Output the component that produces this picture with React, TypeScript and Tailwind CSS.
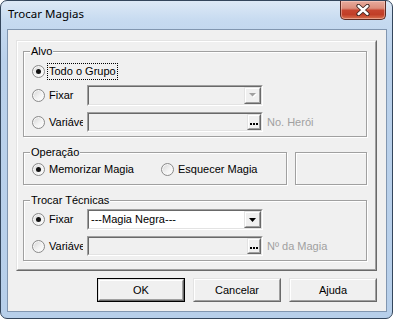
import React from "react";

const TXT = "font-['Liberation_Sans',Arial,sans-serif] text-[11px] leading-[13px] text-black";

function Radio({ checked }: { checked?: boolean }) {
  return (
    <span className="w-[13px] h-[13px] shrink-0 rounded-full border border-[#8a8a8a] bg-[linear-gradient(135deg,#d4d4d4_0%,#f2f2f2_55%,#ffffff_100%)] flex items-center justify-center shadow-[inset_0_0_0_1px_#f7f7f7]">
      {checked && <span className="w-[5px] h-[5px] rounded-full bg-[#121212]" />}
    </span>
  );
}

function Sunken({ className, inner, children }: { className: string; inner: string; children?: React.ReactNode }) {
  return (
    <div className={"border border-t-[#a0a0a0] border-l-[#a0a0a0] border-b-white border-r-white " + className}>
      <div className={"h-full flex items-center border border-t-[#696969] border-l-[#696969] border-b-[#e3e3e3] border-r-[#e3e3e3] " + inner}>
        {children}
      </div>
    </div>
  );
}

function Raised({ className, children }: { className: string; children?: React.ReactNode }) {
  return (
    <div className={"border border-t-[#e3e3e3] border-l-[#e3e3e3] border-b-[#696969] border-r-[#696969] bg-[#f0f0f0] " + className}>
      <div className="w-full h-full border border-t-white border-l-white border-b-[#a0a0a0] border-r-[#a0a0a0] flex items-center justify-center">
        {children}
      </div>
    </div>
  );
}

function Arrow({ disabled }: { disabled?: boolean }) {
  return disabled ? (
    <svg width="8" height="5" viewBox="0 0 8 5">
      <path d="M1 1h7L4.5 4.5z" fill="#ffffff" />
      <path d="M0 0h7L3.5 3.5z" fill="#a0a0a0" />
    </svg>
  ) : (
    <svg width="7" height="4" viewBox="0 0 7 4">
      <path d="M0 0h7L3.5 4z" fill="#000" />
    </svg>
  );
}

function Dots() {
  return (
    <svg width="8" height="2" viewBox="0 0 8 2" className="mt-[3px]">
      <rect x="0" y="0" width="2" height="2" fill="#000" />
      <rect x="3" y="0" width="2" height="2" fill="#000" />
      <rect x="6" y="0" width="2" height="2" fill="#000" />
    </svg>
  );
}

function Group({ label, className, children }: { label?: string; className: string; children?: React.ReactNode }) {
  return (
    <div className={"relative border border-[#a0a0a0] shadow-[inset_1px_1px_0_#ffffff,1px_1px_0_#ffffff] " + className}>
      {label && (
        <span className={"absolute left-[6px] top-[-7px] px-[1px] bg-[#f0f0f0] whitespace-nowrap " + TXT}>{label}</span>
      )}
      {children}
    </div>
  );
}

function CloseBtn() {
  return (
    <div className="w-[46px] h-[19px] rounded-b-[5px] border border-t-0 border-[#5b2a22] bg-[linear-gradient(180deg,#e7ab9d_0%,#dc8e7c_40%,#c6452f_52%,#c13e27_75%,#d8714f_100%)] shadow-[inset_0_0_0_1px_rgba(255,220,210,0.45)] flex items-center justify-center">
      <svg width="14" height="12" viewBox="0 0 14 12">
        <path d="M2.5 2L11.5 10M11.5 2L2.5 10" stroke="#3a2420" strokeWidth="4.2" strokeLinecap="round" />
        <path d="M2.5 2L11.5 10M11.5 2L2.5 10" stroke="#ffffff" strokeWidth="2.4" strokeLinecap="round" />
      </svg>
    </div>
  );
}

export default function App() {
  return (
    <div className="w-[393px] h-[319px] bg-white">
      <div className="w-[393px] h-[319px] rounded-[7px] border border-[#34465c] bg-[linear-gradient(180deg,#dde9f6_0px,#c6daf0_20px,#bad1eb_60px,#b7cfea_100%)] flex flex-col overflow-hidden">
        {/* title bar */}
        <div className="h-[28px] shrink-0 flex items-start justify-between pl-[7px] pr-[6px]">
          <span className="mt-[5px] font-['Noto_Sans',sans-serif] text-[11.5px] leading-[16px] text-black">Trocar Magias</span>
          <CloseBtn />
        </div>
        {/* client */}
        <div className="ml-[6px] w-[380px] h-[283px] shrink-0 border border-[#8196b0] bg-[#f0f0f0] flex flex-col">
          {/* panel */}
          <div className="ml-[8px] mt-[10px] w-[361px] h-[231px] border border-t-[#e3e3e3] border-l-[#e3e3e3] border-b-[#696969] border-r-[#696969]">
            <div className="w-full h-full border border-t-white border-l-white border-b-[#a0a0a0] border-r-[#a0a0a0] pl-[5px] pt-[9px] flex flex-col">
              {/* Alvo */}
              <Group label="Alvo" className="w-[344px] h-[86px] pl-[8px] pt-[11px] flex flex-col">
                <div className="h-[17px] flex items-center">
                  <Radio checked />
                  <span className={"ml-[2px] h-[17px] border border-dotted border-black px-[1px] flex items-center " + TXT}>Todo o Grupo</span>
                </div>
                <div className="mt-[5px] h-[21px] flex items-center">
                  <Radio />
                  <span className={"ml-[2px] w-[36px] pl-[2px] overflow-hidden whitespace-nowrap " + TXT}>Fixar</span>
                  <Sunken className="ml-[4px] w-[176px] h-[21px]" inner="bg-[#f0f0f0] justify-end">
                    <Raised className="w-[17px] h-full">
                      <Arrow disabled />
                    </Raised>
                  </Sunken>
                </div>
                <div className="mt-[6px] h-[20px] flex items-center">
                  <Radio />
                  <span className={"ml-[2px] w-[36px] pl-[2px] overflow-hidden whitespace-nowrap " + TXT}>Variável</span>
                  <Sunken className="ml-[4px] w-[176px] h-[20px]" inner="bg-[#f0f0f0] justify-end">
                    <Raised className="w-[14px] h-full">
                      <Dots />
                    </Raised>
                  </Sunken>
                  <span className={"ml-[4px] whitespace-nowrap font-['Liberation_Sans',Arial,sans-serif] text-[11px] leading-[13px] text-[#a0a0a0]"}>No. Herói</span>
                </div>
              </Group>

              {/* Operação row */}
              <div className="mt-[15px] flex">
                <Group label="Operação" className="w-[264px] h-[33px] pl-[8px] pt-[8px] flex items-start">
                  <div className="w-[129px] h-[17px] flex items-center">
                    <Radio checked />
                    <span className={"ml-[4px] whitespace-nowrap " + TXT}>Memorizar Magia</span>
                  </div>
                  <div className="h-[17px] flex items-center">
                    <Radio />
                    <span className={"ml-[4px] whitespace-nowrap " + TXT}>Esquecer Magia</span>
                  </div>
                </Group>
                <Group className="ml-[8px] w-[72px] h-[33px]" />
              </div>

              {/* Trocar Técnicas */}
              <Group label="Trocar Técnicas" className="mt-[15px] w-[344px] h-[61px] pl-[8px] pt-[8px] flex flex-col">
                <div className="h-[21px] flex items-center">
                  <Radio checked />
                  <span className={"ml-[2px] w-[36px] pl-[2px] overflow-hidden whitespace-nowrap " + TXT}>Fixar</span>
                  <Sunken className="ml-[4px] w-[176px] h-[21px]" inner="bg-white justify-between">
                    <span className={"pl-[2px] whitespace-nowrap " + TXT}>---Magia Negra---</span>
                    <Raised className="w-[17px] h-full">
                      <Arrow />
                    </Raised>
                  </Sunken>
                </div>
                <div className="mt-[6px] h-[20px] flex items-center">
                  <Radio />
                  <span className={"ml-[2px] w-[36px] pl-[2px] overflow-hidden whitespace-nowrap " + TXT}>Variável</span>
                  <Sunken className="ml-[4px] w-[176px] h-[20px]" inner="bg-[#f0f0f0] justify-end">
                    <Raised className="w-[14px] h-full">
                      <Dots />
                    </Raised>
                  </Sunken>
                  <span className={"ml-[4px] whitespace-nowrap font-['Liberation_Sans',Arial,sans-serif] text-[11px] leading-[13px] text-[#a0a0a0]"}>Nº da Magia</span>
                </div>
              </Group>
            </div>
          </div>

          {/* buttons */}
          <div className="mt-[7px] pr-[9px] flex justify-end gap-[8px]">
            <div className="w-[88px] h-[24px] border border-black">
              <Raised className="w-full h-full">
                <span className={TXT}>OK</span>
              </Raised>
            </div>
            <Raised className="w-[88px] h-[24px]">
              <span className={TXT}>Cancelar</span>
            </Raised>
            <Raised className="w-[88px] h-[24px]">
              <span className={TXT}>Ajuda</span>
            </Raised>
          </div>
        </div>
      </div>
    </div>
  );
}
